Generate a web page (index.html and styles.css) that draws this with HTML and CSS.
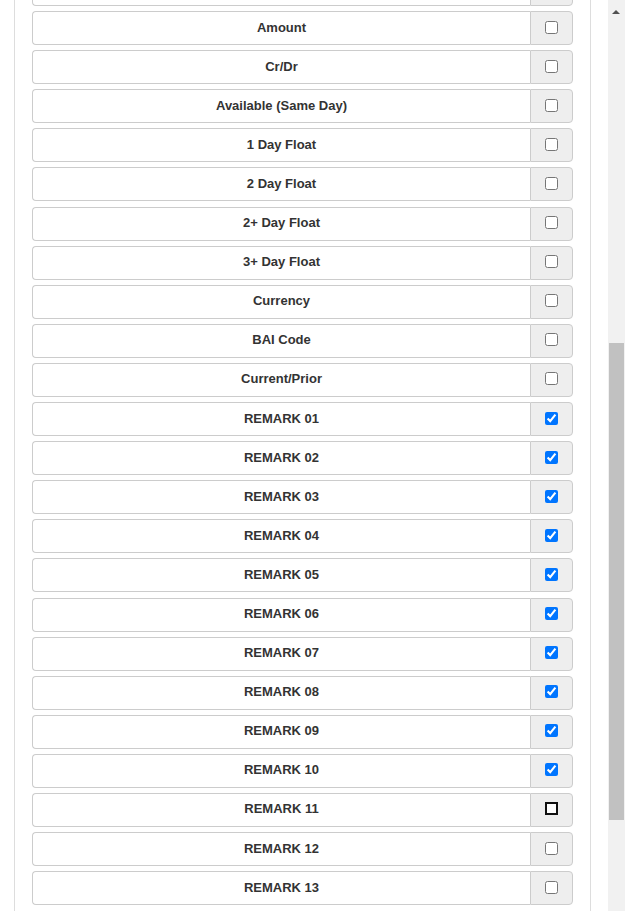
FILE: index.html
```html
<!DOCTYPE html>
<html>
<head>
<meta charset="utf-8">
<link rel="stylesheet" href="styles.css">
</head>
<body>
<div class="page">
  <div class="panel">
    <div class="list">
      <div class="row"><div class="label"></div><div class="addon"><input type="checkbox"></div></div>
      <div class="row"><div class="label">Amount</div><div class="addon"><input type="checkbox"></div></div>
      <div class="row"><div class="label">Cr/Dr</div><div class="addon"><input type="checkbox"></div></div>
      <div class="row"><div class="label">Available (Same Day)</div><div class="addon"><input type="checkbox"></div></div>
      <div class="row"><div class="label">1 Day Float</div><div class="addon"><input type="checkbox"></div></div>
      <div class="row"><div class="label">2 Day Float</div><div class="addon"><input type="checkbox"></div></div>
      <div class="row"><div class="label">2+ Day Float</div><div class="addon"><input type="checkbox"></div></div>
      <div class="row"><div class="label">3+ Day Float</div><div class="addon"><input type="checkbox"></div></div>
      <div class="row"><div class="label">Currency</div><div class="addon"><input type="checkbox"></div></div>
      <div class="row"><div class="label">BAI Code</div><div class="addon"><input type="checkbox"></div></div>
      <div class="row"><div class="label">Current/Prior</div><div class="addon"><input type="checkbox"></div></div>
      <div class="row"><div class="label">REMARK 01</div><div class="addon"><input type="checkbox" checked></div></div>
      <div class="row"><div class="label">REMARK 02</div><div class="addon"><input type="checkbox" checked></div></div>
      <div class="row"><div class="label">REMARK 03</div><div class="addon"><input type="checkbox" checked></div></div>
      <div class="row"><div class="label">REMARK 04</div><div class="addon"><input type="checkbox" checked></div></div>
      <div class="row"><div class="label">REMARK 05</div><div class="addon"><input type="checkbox" checked></div></div>
      <div class="row"><div class="label">REMARK 06</div><div class="addon"><input type="checkbox" checked></div></div>
      <div class="row"><div class="label">REMARK 07</div><div class="addon"><input type="checkbox" checked></div></div>
      <div class="row"><div class="label">REMARK 08</div><div class="addon"><input type="checkbox" checked></div></div>
      <div class="row"><div class="label">REMARK 09</div><div class="addon"><input type="checkbox" checked></div></div>
      <div class="row"><div class="label">REMARK 10</div><div class="addon"><input type="checkbox" checked></div></div>
      <div class="row"><div class="label">REMARK 11</div><div class="addon"><input type="checkbox" class="focused"></div></div>
      <div class="row"><div class="label">REMARK 12</div><div class="addon"><input type="checkbox"></div></div>
      <div class="row"><div class="label">REMARK 13</div><div class="addon"><input type="checkbox"></div></div>
    </div>
  </div>
</div>
<div class="scrollbar">
  <div class="arrow"></div>
  <div class="thumb"></div>
</div>
</body>
</html>
```

FILE: styles.css
```css
html, body {
  margin: 0;
  padding: 0;
  background: #fff;
  overflow: hidden;
  height: 911px;
}
body {
  font-family: "Liberation Sans", Arial, sans-serif;
  font-size: 13px;
  color: #333;
}
.page {
  width: 608px;
  height: 911px;
  overflow: hidden;
}
.panel {
  margin-left: 14px;
  border-left: 1px solid #ddd;
  border-right: 1px solid #ddd;
  height: 911px;
  padding: 0 17px;
  box-sizing: border-box;
  width: 577px;
  overflow: hidden;
}
.list {
  margin-top: -28px;
  display: flex;
  flex-direction: column;
  gap: 5.1px;
}
.row {
  display: flex;
  height: 34px;
  flex-shrink: 0;
}
.label {
  flex: 1;
  border: 1px solid #ccc;
  border-right: none;
  border-radius: 4px 0 0 4px;
  display: flex;
  align-items: center;
  justify-content: center;
  font-weight: bold;
  background: #fff;
  padding-bottom: 2px;
  box-sizing: border-box;
}
.addon {
  width: 43px;
  box-sizing: border-box;
  border: 1px solid #ccc;
  border-radius: 0 4px 4px 0;
  background: #eee;
  display: flex;
  align-items: center;
  justify-content: center;
  padding-bottom: 2px;
}
.addon input {
  margin: 0;
  width: 13px;
  height: 13px;
}
.addon input.focused {
  outline: 2px solid #101010;
  outline-offset: -2px;
  border-radius: 4px;
}
.scrollbar {
  position: absolute;
  top: 0;
  left: 608px;
  width: 17px;
  height: 911px;
  background: #f1f1f1;
}
.arrow {
  position: absolute;
  left: 4px;
  top: 10px;
  width: 0;
  height: 0;
  border-left: 4px solid transparent;
  border-right: 4px solid transparent;
  border-bottom: 4px solid #505050;
}
.thumb {
  position: absolute;
  left: 1px;
  top: 343px;
  width: 15px;
  height: 477px;
  background: #c1c1c1;
}
```
